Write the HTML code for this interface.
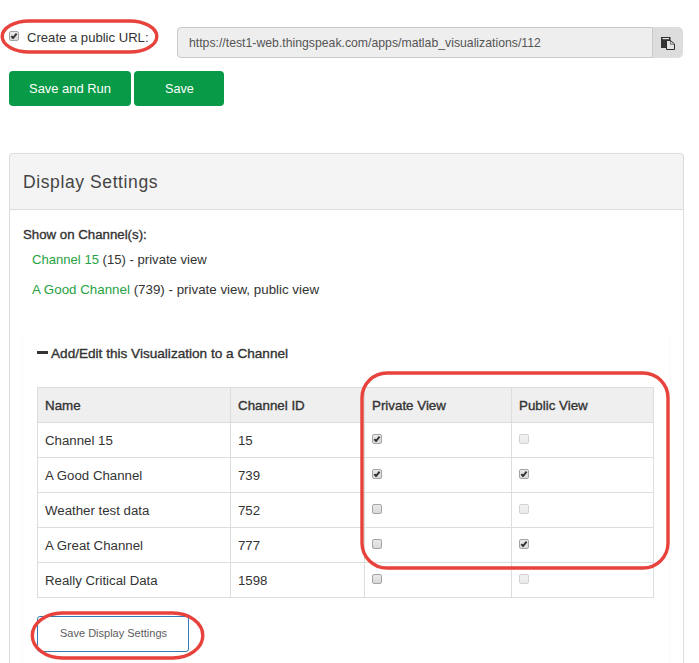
<!DOCTYPE html>
<html>
<head>
<meta charset="utf-8">
<style>
html,body{margin:0;padding:0;background:#fff;width:699px;height:663px;overflow:hidden;position:relative;}
*{box-sizing:border-box;}
body{font-family:"Liberation Sans",sans-serif;color:#333;}
.a{position:absolute;white-space:nowrap;}
.t{position:absolute;white-space:nowrap;line-height:20px;height:20px;}
.cb{position:absolute;width:10px;height:10px;border:1px solid #a4a4a4;border-radius:2px;background:linear-gradient(#e9e9e9,#d9d9d9);}
.cb.dis{border-color:#d2d2d2;background:linear-gradient(#f2f2f2,#eaeaea);}
.cb svg{position:absolute;left:0;top:0;}
.green{color:#27a243;}
</style>
</head>
<body>

<!-- top checkbox -->
<div class="cb" style="left:9px;top:31px;"><svg width="8" height="8" viewBox="0 0 8 8"><path d="M1.3 4.1 L3.1 6 L6.6 1.6" stroke="#333" stroke-width="2" fill="none" stroke-linejoin="round"/></svg></div>
<div class="t" id="lbl" style="left:27px;top:28px;font-size:13.1px;color:#333;">Create a public URL:</div>

<!-- URL input -->
<div class="a" style="left:177px;top:27px;width:476px;height:31px;background:#eee;border:1px solid #c9c9c9;border-radius:4px 0 0 4px;"></div>
<div class="t" id="url" style="left:189px;top:33px;font-size:12.25px;color:#555;">https://test1-web.thingspeak.com/apps/matlab_visualizations/112</div>
<div class="a" style="left:653px;top:27px;width:30px;height:31px;background:#ddd;border-radius:0 5px 5px 0;"></div>
<svg class="a" style="left:661px;top:37px;" width="15" height="14" viewBox="0 0 15 14">
  <rect x="0" y="0" width="9.5" height="11" fill="#333"/>
  <rect x="1.5" y="1" width="6.5" height="1.2" fill="#e6e6e6"/>
  <path d="M5.5 3.5 H9.5 L13.5 7 V12.5 H5.5 Z" fill="#e2e2e2" stroke="#2a2a2a" stroke-width="1"/>
  <path d="M9.5 3.8 V7.2 H13.3" fill="none" stroke="#555" stroke-width="0.8"/>
</svg>

<!-- green buttons -->
<div class="a" style="left:9px;top:71px;width:122px;height:35px;background:#089a46;border-radius:4px;"></div>
<div class="t" style="left:29px;top:79px;font-size:12.95px;color:#fff;">Save and Run</div>
<div class="a" style="left:134px;top:71px;width:90px;height:35px;background:#089a46;border-radius:4px;"></div>
<div class="t" style="left:165px;top:79px;font-size:12.7px;color:#fff;">Save</div>

<!-- panel -->
<div class="a" style="left:9px;top:153px;width:675px;height:520px;border:1px solid #ddd;border-radius:4px;background:#fff;"></div>
<div class="a" style="left:9px;top:153px;width:675px;height:57px;border:1px solid #ddd;border-radius:4px 4px 0 0;background:#f4f4f4;"></div>
<div class="t" style="left:23px;top:172px;font-size:17.5px;letter-spacing:0.6px;color:#444;">Display Settings</div>

<div class="t" style="left:23px;top:225px;font-size:13.25px;color:#333;-webkit-text-stroke:0.35px #333;">Show on Channel(s):</div>
<div class="t" style="left:32px;top:250px;font-size:13.1px;color:#333;"><span class="green">Channel 15</span> (15) - private view</div>
<div class="t" style="left:32px;top:280px;font-size:13.35px;color:#333;"><span class="green">A Good Channel</span> (739) - private view, public view</div>

<!-- well -->
<div class="a" style="left:22px;top:333px;width:648px;height:340px;border-left:1px solid #fafafa;border-right:1px solid #fafafa;"></div>
<div class="a" style="left:37px;top:351px;width:11px;height:3px;background:#333;"></div>
<div class="t" style="left:51px;top:344px;font-size:13.6px;color:#333;-webkit-text-stroke:0.35px #333;">Add/Edit this Visualization to a Channel</div>

<!-- table -->
<div class="a" style="left:37px;top:387px;width:617px;height:211px;border:1px solid #ddd;"></div>
<div class="a" style="left:38px;top:388px;width:615px;height:34px;background:#efefef;"></div>
<div class="a" style="left:38px;top:422px;width:615px;height:1px;background:#ddd;"></div>
<div class="a" style="left:38px;top:457px;width:615px;height:1px;background:#ddd;"></div>
<div class="a" style="left:38px;top:492px;width:615px;height:1px;background:#ddd;"></div>
<div class="a" style="left:38px;top:527px;width:615px;height:1px;background:#ddd;"></div>
<div class="a" style="left:38px;top:562px;width:615px;height:1px;background:#ddd;"></div>
<div class="a" style="left:230px;top:388px;width:1px;height:209px;background:#ddd;"></div>
<div class="a" style="left:364px;top:388px;width:1px;height:209px;background:#ddd;"></div>
<div class="a" style="left:511px;top:388px;width:1px;height:209px;background:#ddd;"></div>

<div class="t" style="left:45px;top:396px;font-size:13.35px;color:#333;-webkit-text-stroke:0.35px #333;">Name</div>
<div class="t" style="left:238px;top:396px;font-size:13.35px;color:#333;-webkit-text-stroke:0.35px #333;">Channel ID</div>
<div class="t" style="left:372px;top:396px;font-size:13.35px;color:#333;-webkit-text-stroke:0.35px #333;">Private View</div>
<div class="t" style="left:519px;top:396px;font-size:13.35px;color:#333;-webkit-text-stroke:0.35px #333;">Public View</div>

<div class="t" style="left:45px;top:431px;font-size:13.25px;">Channel 15</div>
<div class="t" style="left:238px;top:431px;font-size:13.25px;">15</div>
<div class="t" style="left:45px;top:466px;font-size:13.25px;">A Good Channel</div>
<div class="t" style="left:238px;top:466px;font-size:13.25px;">739</div>
<div class="t" style="left:45px;top:501px;font-size:13.25px;">Weather test data</div>
<div class="t" style="left:238px;top:501px;font-size:13.25px;">752</div>
<div class="t" style="left:45px;top:536px;font-size:13.25px;">A Great Channel</div>
<div class="t" style="left:238px;top:536px;font-size:13.25px;">777</div>
<div class="t" style="left:45px;top:571px;font-size:13.25px;">Really Critical Data</div>
<div class="t" style="left:238px;top:571px;font-size:13.25px;">1598</div>

<!-- checkboxes -->
<div class="cb" style="left:372px;top:434px;"><svg width="8" height="8" viewBox="0 0 8 8"><path d="M1.3 4.1 L3.1 6 L6.6 1.6" stroke="#333" stroke-width="2" fill="none" stroke-linejoin="round"/></svg></div>
<div class="cb dis" style="left:519px;top:434px;"></div>
<div class="cb" style="left:372px;top:469px;"><svg width="8" height="8" viewBox="0 0 8 8"><path d="M1.3 4.1 L3.1 6 L6.6 1.6" stroke="#333" stroke-width="2" fill="none" stroke-linejoin="round"/></svg></div>
<div class="cb" style="left:519px;top:469px;"><svg width="8" height="8" viewBox="0 0 8 8"><path d="M1.3 4.1 L3.1 6 L6.6 1.6" stroke="#333" stroke-width="2" fill="none" stroke-linejoin="round"/></svg></div>
<div class="cb" style="left:372px;top:504px;"></div>
<div class="cb dis" style="left:519px;top:504px;"></div>
<div class="cb" style="left:372px;top:539px;"></div>
<div class="cb" style="left:519px;top:539px;"><svg width="8" height="8" viewBox="0 0 8 8"><path d="M1.3 4.1 L3.1 6 L6.6 1.6" stroke="#333" stroke-width="2" fill="none" stroke-linejoin="round"/></svg></div>
<div class="cb" style="left:372px;top:574px;"></div>
<div class="cb dis" style="left:519px;top:574px;"></div>

<!-- save display settings button -->
<div class="a" style="left:37px;top:616px;width:152px;height:36px;border:1px solid #337ab7;border-radius:3px;background:#fff;"></div>
<div class="t" style="left:60px;top:623px;font-size:11px;color:#5c5c5c;">Save Display Settings</div>

<!-- red annotations -->
<svg class="a" style="left:0;top:0;" width="699" height="663" viewBox="0 0 699 663">
  <rect x="2.2" y="21" width="154.6" height="31" rx="27" ry="15.5" fill="none" stroke="#e8423d" stroke-width="3.4"/>
  <rect x="362" y="373" width="306" height="195" rx="25" ry="25" fill="none" stroke="#e8423d" stroke-width="3.4"/>
  <rect x="32.3" y="613" width="170.5" height="45" rx="30" ry="22.5" fill="none" stroke="#e8423d" stroke-width="3.4"/>
</svg>

</body>
</html>
